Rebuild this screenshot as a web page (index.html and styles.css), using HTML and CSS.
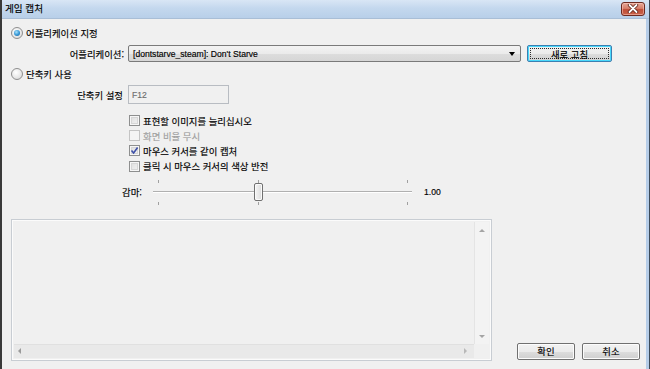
FILE: index.html
```html
<!DOCTYPE html>
<html lang="ko">
<head>
<meta charset="utf-8">
<title>게임 캡처</title>
<link rel="stylesheet" href="styles.css">
</head>
<body>
<div class="window">
  <div class="titlebar">
    <span class="title">게임 캡처</span>
    <div class="close">
      <svg width="14" height="9" viewBox="0 0 14 9">
        <path d="M3.5 1 L10.5 8 M10.5 1 L3.5 8" stroke="#5a1d14" stroke-width="3.4" stroke-linecap="round"/>
        <path d="M3.5 1 L10.5 8 M10.5 1 L3.5 8" stroke="#ffffff" stroke-width="1.8" stroke-linecap="round"/>
      </svg>
    </div>
  </div>
  <div class="client">
    <div class="row radio-row first">
      <span class="radio checked"></span>
      <span class="label">어플리케이션 지정</span>
    </div>
    <div class="row app-row">
      <span class="field-label">어플리케이션:</span>
      <div class="combo">
        <span class="combo-text">[dontstarve_steam]: Don't Starve</span>
        <span class="combo-arrow"></span>
      </div>
      <div class="btn default"><span class="focus">새로 고침</span></div>
    </div>
    <div class="row radio-row second">
      <span class="radio"></span>
      <span class="label">단축키 사용</span>
    </div>
    <div class="row hotkey-row">
      <span class="field-label">단축키 설정</span>
      <div class="input">F12</div>
    </div>
    <div class="checks">
      <div class="check-row"><span class="check"></span><span>표현할 이미지를 늘리십시오</span></div>
      <div class="check-row disabled"><span class="check"></span><span>화면 비율 무시</span></div>
      <div class="check-row"><span class="check on"><svg width="9" height="9" viewBox="0 0 9 9"><path d="M1.5 4.5 L3.6 7 L7.6 1.5" fill="none" stroke="#3c4fa8" stroke-width="1.6"/></svg></span><span>마우스 커서를 같이 캡처</span></div>
      <div class="check-row"><span class="check"></span><span>클릭 시 마우스 커서의 색상 반전</span></div>
    </div>
    <div class="row gamma-row">
      <span class="gamma-label">감마:</span>
      <div class="slider">
        <i class="tick t1 tick-up"></i><i class="tick t2 tick-up"></i><i class="tick t3 tick-up"></i>
        <div class="track"></div>
        <i class="tick t1 tick-down"></i><i class="tick t2 tick-down"></i><i class="tick t3 tick-down"></i>
        <div class="thumb"></div>
      </div>
      <span class="gamma-value">1.00</span>
    </div>
    <div class="lower">
      <div class="textarea">
        <div class="ta-main">
          <div class="ta-content"></div>
          <div class="vscroll"><span class="arr up"></span><span class="arr down"></span></div>
        </div>
        <div class="hscroll-row">
          <div class="hscroll"><span class="arr left"></span><span class="arr right"></span></div>
          <div class="corner"></div>
        </div>
      </div>
      <div class="buttons">
        <div class="btn">확인</div>
        <div class="btn">취소</div>
      </div>
    </div>
  </div>
</div>
</body>
</html>
```
FILE: styles.css
```css
* { box-sizing: border-box; }
html, body { margin: 0; padding: 0; }
body {
  width: 650px;
  height: 369px;
  overflow: hidden;
  background: #f0f0f0;
  font-family: "Noto Sans CJK KR", "Liberation Sans", sans-serif;
  font-size: 9.4px;
  color: #000;
  -webkit-text-stroke: 0.15px currentColor;
}
.window {
  width: 650px;
  height: 369px;
  display: flex;
  flex-direction: column;
  border-left: 2px solid #3a3a3a;
  border-right: 1px solid #3d4a58;
  background: #f0f0f0;
}
.titlebar {
  height: 19px;
  flex: none;
  display: flex;
  align-items: center;
  justify-content: space-between;
  background: linear-gradient(#d9e6f5 0%, #c4d8ee 45%, #b8cfe9 100%);
  border-bottom: 1px solid #a9bed6;
  padding: 0 4px 0 3px;
}
.title { font-size: 9.6px; color: #000; line-height: 1; }
.close {
  width: 24px;
  height: 14px;
  margin-top: -1px;
  border: 1px solid #6d2a20;
  border-radius: 3px;
  background: linear-gradient(#e7a797 0%, #d6806c 45%, #c04e38 55%, #c9634a 100%);
  box-shadow: inset 0 0 0 1px rgba(255,210,200,0.5);
  display: flex;
  align-items: center;
  justify-content: center;
}
.close svg { display: block; }
.client {
  flex: 1;
  display: flex;
  flex-direction: column;
  border-right: 3px solid #b6cde8;
}
.row { display: flex; align-items: center; flex: none; }
.radio-row { height: 14px; padding-left: 9px; }
.radio-row.first { margin-top: 7px; }
.radio-row.second { margin-top: 5px; }
.radio {
  width: 12px; height: 12px; border-radius: 50%;
  border: 1px solid #8f8f8f;
  background: radial-gradient(circle at 40% 35%, #ffffff 0%, #e6e6e6 60%, #d0d0d0 100%);
  display: flex; align-items: center; justify-content: center;
  margin-right: 3px;
}
.radio.checked::after {
  content: "";
  width: 6px; height: 6px; border-radius: 50%;
  background: radial-gradient(circle at 40% 35%, #a9e3fb 0%, #3a9ad8 50%, #135e95 100%);
}
.field-label { width: 122px; text-align: right; flex: none; }
.app-row { height: 17px; margin-top: 5px; }
.combo {
  margin-left: 4px;
  width: 393px; height: 17px;
  border: 1px solid #7a7a7a;
  border-radius: 2px;
  background: linear-gradient(#f3f3f3 0%, #ebebeb 50%, #dddddd 51%, #d6d6d6 100%);
  display: flex; align-items: center; justify-content: space-between;
  padding: 0 5px 0 4px;
}
.combo-text { font-family: "Liberation Sans", sans-serif; font-size: 8.6px; }
.combo-arrow {
  width: 0; height: 0;
  border-left: 3.5px solid transparent;
  border-right: 3.5px solid transparent;
  border-top: 4px solid #000;
}
.btn {
  height: 17px;
  border: 1px solid #707070;
  border-radius: 2px;
  background: linear-gradient(#f2f2f2 0%, #ebebeb 50%, #dddddd 51%, #cfcfcf 100%);
  box-shadow: inset 0 0 0 1px #fcfcfc;
  display: flex; align-items: center; justify-content: center;
}
.btn.default {
  margin-left: 6px;
  width: 85px;
  border-color: #3c7fb1;
  box-shadow: inset 0 0 0 1px #48d8fb;
  padding: 2px;
}
.focus {
  flex: 1; align-self: stretch;
  border: 1px dotted #2a2a2a;
  display: flex; align-items: center; justify-content: center;
}
.hotkey-row { height: 19px; margin-top: 4px; }
.hotkey-row .field-label { width: 121px; }
.input {
  margin-left: 5px;
  width: 101px; height: 19px;
  border: 1px solid #b8bcc2;
  background: #f0f0f0;
  color: #6d6d6d;
  font-family: "Liberation Sans", sans-serif;
  font-size: 8.6px;
  display: flex; align-items: center;
  padding-left: 3px;
}
.checks { margin-top: 9px; padding-left: 127px; display: flex; flex-direction: column; }
.check-row { height: 15.2px; display: flex; align-items: center; }
.check {
  width: 11px; height: 11px;
  border: 1px solid #8e8f8f;
  background: linear-gradient(135deg, #dcdcdc 0%, #f4f4f4 100%);
  box-shadow: inset 0 0 0 1px #f6f6f6, inset 0 0 0 2px #d6d6d6;
  margin-right: 3px;
  display: flex; align-items: center; justify-content: center;
}
.check svg { display: block; }
.check-row.disabled { color: #a0a0a0; }
.check-row.disabled .check { border-color: #c4c4c4; box-shadow: none; background: #f4f4f4; }
.gamma-row { height: 25px; margin-top: 6px; padding-left: 120px; }
.gamma-label { width: 31px; flex: none; }
.slider { position: relative; width: 259px; height: 25px; flex: none; }
.track {
  position: absolute; left: 0; right: 0; top: 11px;
  height: 2px; border-top: 1px solid #b0b0b0; border-bottom: 1px solid #ffffff;
}
.tick { position: absolute; width: 1px; height: 3px; background: #a0a0a0; }
.tick-up { top: 0; }
.tick-down { top: 22px; }
.tick.t1 { left: 5px; }
.tick.t2 { left: 105px; }
.tick.t3 { left: 254px; }
.thumb {
  position: absolute; left: 101px; top: 3px;
  width: 9px; height: 18px;
  border: 1px solid #707070; border-radius: 2px;
  background: linear-gradient(90deg, #f5f5f5 0%, #e6e6e6 60%, #d9d9d9 100%);
  box-shadow: inset 0 0 0 1px #fafafa;
}
.gamma-value { margin-left: 12px; font-family: "Liberation Sans", sans-serif; font-size: 8.6px; }
.lower { flex: none; margin-top: 14px; display: flex; align-items: flex-end; padding-left: 9px; }
.textarea {
  width: 481px; height: 142px;
  border: 1px solid #c8cdd3;
  box-shadow: inset 0 0 0 1px #fbfbfb;
  background: #f0f0f0;
  display: flex; flex-direction: column;
  padding: 2px;
}
.ta-main { flex: 1; display: flex; }
.ta-content { flex: 1; }
.vscroll {
  width: 15px; position: relative;
  background: #f3f3f3;
  border-left: 1px solid #e4e4e4;
}
.hscroll-row { height: 14px; display: flex; }
.hscroll { flex: 1; position: relative; background: #e9e9e9; border-top: 1px solid #e0e0e0; }
.corner { width: 15px; background: #f0f0f0; }
.arr { position: absolute; width: 0; height: 0; }
.arr.up { top: 7px; left: 4px; border-left: 3px solid transparent; border-right: 3px solid transparent; border-bottom: 3px solid #a4a4a4; }
.arr.down { bottom: 6px; left: 4px; border-left: 3px solid transparent; border-right: 3px solid transparent; border-top: 3px solid #a4a4a4; }
.arr.left { left: 4px; top: 3px; border-top: 3px solid transparent; border-bottom: 3px solid transparent; border-right: 3px solid #9a9a9a; }
.arr.right { right: 7px; top: 3px; border-top: 3px solid transparent; border-bottom: 3px solid transparent; border-left: 3px solid #b8b8b8; }
.buttons { display: flex; gap: 7px; margin-left: 25px; margin-bottom: 1px; }
.buttons .btn { width: 58px; }
```
